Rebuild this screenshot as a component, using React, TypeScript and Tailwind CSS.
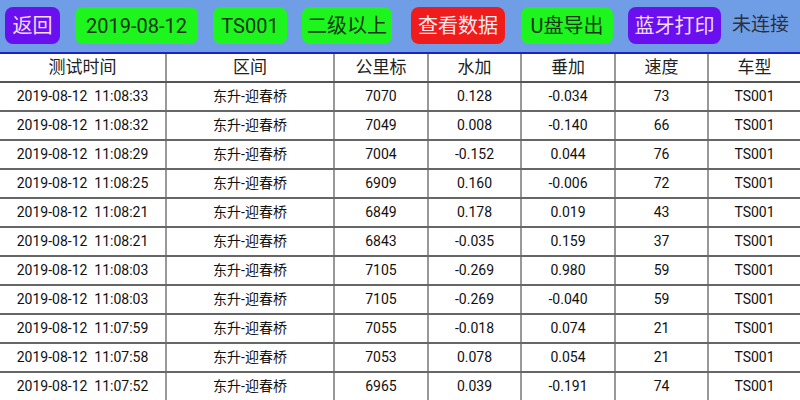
const rows = [
  ["2019-08-12  11:08:33", "东升-迎春桥", "7070", "0.128", "-0.034", "73", "TS001"],
  ["2019-08-12  11:08:32", "东升-迎春桥", "7049", "0.008", "-0.140", "66", "TS001"],
  ["2019-08-12  11:08:29", "东升-迎春桥", "7004", "-0.152", "0.044", "76", "TS001"],
  ["2019-08-12  11:08:25", "东升-迎春桥", "6909", "0.160", "-0.006", "72", "TS001"],
  ["2019-08-12  11:08:21", "东升-迎春桥", "6849", "0.178", "0.019", "43", "TS001"],
  ["2019-08-12  11:08:21", "东升-迎春桥", "6843", "-0.035", "0.159", "37", "TS001"],
  ["2019-08-12  11:08:03", "东升-迎春桥", "7105", "-0.269", "0.980", "59", "TS001"],
  ["2019-08-12  11:08:03", "东升-迎春桥", "7105", "-0.269", "-0.040", "59", "TS001"],
  ["2019-08-12  11:07:59", "东升-迎春桥", "7055", "-0.018", "0.074", "21", "TS001"],
  ["2019-08-12  11:07:58", "东升-迎春桥", "7053", "0.078", "0.054", "21", "TS001"],
  ["2019-08-12  11:07:52", "东升-迎春桥", "6965", "0.039", "-0.191", "74", "TS001"],
]

const headers = ["测试时间", "区间", "公里标", "水加", "垂加", "速度", "车型"]

const grid = "grid grid-cols-[165px_168px_94px_93px_94px_93px_1fr]"

export default function App() {
  return (
    <div
      className="h-[400px] w-[800px] overflow-hidden bg-white"
      style={{ fontFamily: 'Roboto, "Noto Sans CJK SC", sans-serif' }}
    >
      <div className="flex h-[52px] items-start bg-[#709ee6] pl-[5px] pt-[7px] text-[20px]">
        <button className="flex h-[37px] w-[55px] items-center justify-center rounded-lg bg-[#6a10f0] text-[#f3dcff]">
          返回
        </button>
        <button className="ml-[15px] flex h-[37px] w-[123px] items-center justify-center rounded-lg bg-[#1ef51e] text-[#123512]">
          2019-08-12
        </button>
        <button className="ml-[15px] flex h-[37px] w-[74px] items-center justify-center rounded-lg bg-[#1ef51e] text-[#123512]">
          TS001
        </button>
        <button className="ml-[15px] flex h-[37px] w-[90px] items-center justify-center rounded-lg bg-[#1ef51e] text-[#123512]">
          二级以上
        </button>
        <button className="ml-[19px] flex h-[37px] w-[94px] items-center justify-center rounded-lg bg-[#f01c1c] text-[#ffe8ee]">
          查看数据
        </button>
        <button className="ml-[16px] flex h-[37px] w-[92px] items-center justify-center rounded-lg bg-[#1ef51e] text-[#123512]">
          U盘导出
        </button>
        <button className="ml-[15px] flex h-[37px] w-[93px] items-center justify-center rounded-lg bg-[#6a10f0] text-[#f3dcff]">
          蓝牙打印
        </button>
        <span className="ml-[11px] flex h-[37px] items-center text-[19px] text-[#2a3040]">未连接</span>
      </div>
      <div className="h-[2px] bg-[#1d22c8]" />

      <div className={`${grid} h-[29px] border-b-2 border-[#555] text-[17px] text-[#222]`}>
        {headers.map((h, i) => (
          <div
            key={h}
            className={`flex items-center justify-center ${i > 0 ? "border-l-2 border-[#999]" : ""}`}
          >
            {h}
          </div>
        ))}
      </div>

      {rows.map((r, ri) => (
        <div key={ri} className={`${grid} h-[29px] border-b-2 border-[#666] text-[14px] text-[#111]`}>
          {r.map((c, i) => (
            <div
              key={i}
              className={`flex items-center justify-center whitespace-pre ${i > 0 ? "border-l-2 border-[#999]" : ""}`}
            >
              {c}
            </div>
          ))}
        </div>
      ))}
    </div>
  )
}
